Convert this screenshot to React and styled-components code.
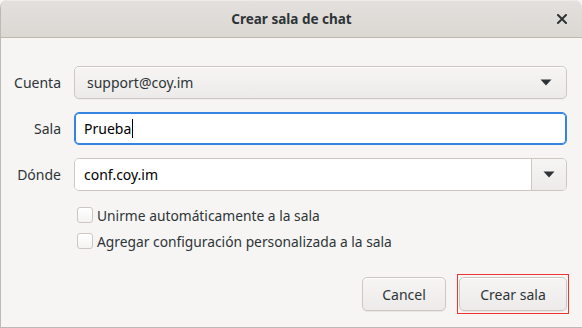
import React from "react";
import styled, { createGlobalStyle } from "styled-components";

const Global = createGlobalStyle`
  html, body { margin: 0; padding: 0; background: #f6f5f4; }
  body { font-family: "Noto Sans", "Open Sans", sans-serif; color: #2e3436; }
  * { box-sizing: border-box; }
`;

const Window = styled.div`
  width: 582px;
  height: 328px;
  display: flex;
  flex-direction: column;
  background: #f6f5f4;
  border-left: 1px solid #bdbab6;
  border-bottom: 1px solid #bdbab6;
  border-radius: 8px 8px 0 0;
  overflow: hidden;
`;

const TitleBar = styled.div`
  height: 38px;
  flex: none;
  display: flex;
  align-items: center;
  justify-content: center;
  position: relative;
  background: linear-gradient(to bottom, #e3e0dd, #dbd8d4);
  border-bottom: 1px solid #bfb8b1;
  box-shadow: inset 0 1px #ecebe9;
  font-family: "Noto Sans", sans-serif;
  font-weight: 700;
  font-size: 13.5px;
  color: #2e3436;
`;

const CloseButton = styled.div`
  position: absolute;
  right: 13px;
  top: 12px;
  width: 14px;
  height: 14px;
  display: flex;
  align-items: center;
  justify-content: center;
`;

const Body = styled.div`
  flex: 1;
  display: flex;
  flex-direction: column;
  padding: 28px 15px 15px 0;
`;

const Form = styled.div`
  display: grid;
  grid-template-columns: 60px 1fr;
  column-gap: 13px;
  row-gap: 13px;
  align-items: center;
`;

const Label = styled.div`
  text-align: right;
  font-size: 14px;
  color: #2e3436;
`;

const ComboButton = styled.div`
  height: 33px;
  display: flex;
  align-items: center;
  justify-content: space-between;
  padding: 0 14px 0 12px;
  border: 1px solid #cdc7c2;
  border-radius: 5px;
  background: linear-gradient(to bottom, #f6f5f4, #edebe9);
  box-shadow: inset 0 1px #fff, 0 1px rgba(0,0,0,0.03);
  font-size: 14px;
`;

const Entry = styled.div`
  height: 33px;
  display: flex;
  align-items: center;
  padding: 0 9px;
  border: 1px solid ${p => (p.$focused ? "#3584e4" : "#cdc7c2")};
  box-shadow: ${p => (p.$focused ? "inset 0 0 0 1px #3584e4" : "none")};
  border-radius: 5px;
  background: #fff;
  font-size: 14px;
  color: #000;
`;

const Caret = styled.span`
  display: inline-block;
  width: 1px;
  height: 19px;
  background: #000;
  margin-left: 1px;
`;

const ComboEntry = styled.div`
  height: 33px;
  display: flex;
  border: 1px solid #cdc7c2;
  border-radius: 5px;
  overflow: hidden;
`;

const ComboEntryField = styled.div`
  flex: 1;
  display: flex;
  align-items: center;
  padding: 0 9px;
  background: #fff;
  font-size: 14px;
  color: #000;
`;

const ComboEntryButton = styled.div`
  width: 35px;
  flex: none;
  display: flex;
  align-items: center;
  justify-content: center;
  border-left: 1px solid #cdc7c2;
  background: linear-gradient(to bottom, #f6f5f4, #edebe9);
`;

const Checks = styled.div`
  display: flex;
  flex-direction: column;
  gap: 10px;
  padding: 16px 0 0 76px;
`;

const CheckRow = styled.label`
  display: flex;
  align-items: center;
  gap: 4px;
  font-size: 13.8px;
  height: 16px;
`;

const CheckBox = styled.span`
  width: 16px;
  height: 16px;
  border: 1px solid #cdc7c2;
  border-radius: 3px;
  background: linear-gradient(to bottom, #ffffff, #f4f3f2);
`;

const Actions = styled.div`
  margin-top: auto;
  display: flex;
  justify-content: flex-end;
  gap: 13px;
  padding-bottom: 1px;
`;

const Button = styled.div`
  height: 34px;
  width: ${p => p.$w}px;
  display: flex;
  align-items: center;
  justify-content: center;
  border: 1px solid #cdc7c2;
  border-radius: 5px;
  background: linear-gradient(to bottom, #f6f5f4, #edebe9);
  box-shadow: inset 0 1px #fff, 0 1px rgba(0,0,0,0.05);
  font-size: 14px;
  color: #2e3436;
  position: relative;
  ${p =>
    p.$default &&
    `&::after {
      content: "";
      position: absolute;
      inset: -4px -3px;
      border: 1px solid #ee3333;
      pointer-events: none;
    }`}
`;

const Arrow = () => (
  <svg width="12" height="7" viewBox="0 0 12 7">
    <path d="M0.5 0.5 L11.5 0.5 L6 6.5 Z" fill="#2e3436" />
  </svg>
);

export default function App() {
  return (
    <Window>
      <Global />
      <TitleBar>
        Crear sala de chat
        <CloseButton>
          <svg width="10" height="10" viewBox="0 0 10 10">
            <path d="M1 1 L9 9 M9 1 L1 9" stroke="#2e3436" strokeWidth="2" strokeLinecap="square" />
          </svg>
        </CloseButton>
      </TitleBar>
      <Body>
        <Form>
          <Label>Cuenta</Label>
          <ComboButton>
            <span>support@coy.im</span>
            <Arrow />
          </ComboButton>
          <Label>Sala</Label>
          <Entry $focused>
            Prueba<Caret />
          </Entry>
          <Label>Dónde</Label>
          <ComboEntry>
            <ComboEntryField>conf.coy.im</ComboEntryField>
            <ComboEntryButton>
              <Arrow />
            </ComboEntryButton>
          </ComboEntry>
        </Form>
        <Checks>
          <CheckRow>
            <CheckBox />
            Unirme automáticamente a la sala
          </CheckRow>
          <CheckRow>
            <CheckBox />
            Agregar configuración personalizada a la sala
          </CheckRow>
        </Checks>
        <Actions>
          <Button $w={84}>Cancel</Button>
          <Button $w={108} $default>Crear sala</Button>
        </Actions>
      </Body>
    </Window>
  );
}
